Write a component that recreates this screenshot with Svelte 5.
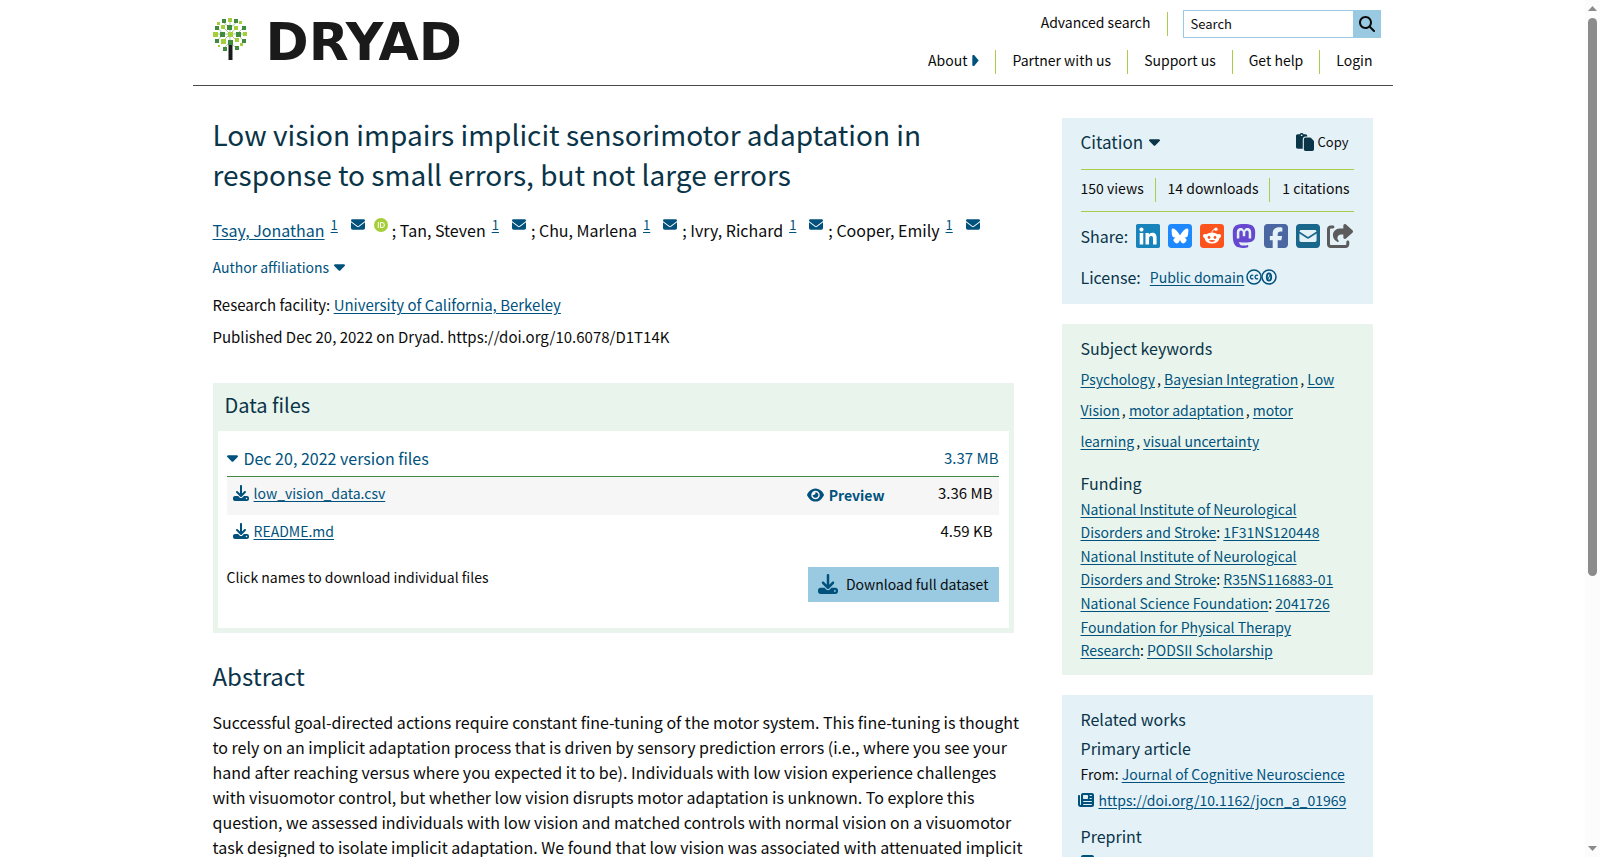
<script lang="ts">
    interface Author {
        name: string;
        orcid?: boolean;
    }

    interface Grant {
        funder: string;
        award: string;
    }

    let query: string = "";

    const navLinks: string[] = ["Partner with us", "Support us", "Get help", "Login"];

    const authors: Author[] = [
        { name: "Tsay, Jonathan", orcid: true },
        { name: "Tan, Steven" },
        { name: "Chu, Marlena" },
        { name: "Ivry, Richard" },
        { name: "Cooper, Emily" },
    ];

    const files = [
        { name: "low_vision_data.csv", size: "3.36 MB", preview: true },
        { name: "README.md", size: "4.59 KB", preview: false },
    ];

    const keywords: string[] = [
        "Psychology",
        "Bayesian Integration",
        "Low Vision",
        "motor adaptation",
        "motor learning",
        "visual uncertainty",
    ];

    const grants: Grant[] = [
        { funder: "National Institute of Neurological Disorders and Stroke", award: "1F31NS120448" },
        { funder: "National Institute of Neurological Disorders and Stroke", award: "R35NS116883-01" },
        { funder: "National Science Foundation", award: "2041726" },
        { funder: "Foundation for Physical Therapy Research", award: "PODSII Scholarship" },
    ];

    // x, y, size, dark?
    const leaves: [number, number, number, boolean][] = [
        [15, 0, 4, false], [9, 1, 4, true], [21, 1, 4, true],
        [4, 4, 3, false], [26, 3, 3, false],
        [2, 8, 4, true], [8, 7, 4, false], [14, 7, 5, true], [21, 8, 4, false], [29, 8, 4, true],
        [0, 14, 5, false], [7, 14, 5, true], [15, 14, 5, false], [23, 14, 5, true], [30, 14, 4, false],
        [2, 21, 4, true], [8, 21, 5, false], [15, 22, 5, true], [22, 20, 4, false], [29, 21, 4, true],
        [5, 27, 2, false], [27, 25, 3, false], [10, 29, 4, true], [22, 28, 4, true],
    ];

    const caret = "M137.4 374.6c12.5 12.5 32.8 12.5 45.3 0l128-128c9.2-9.2 11.9-22.9 6.9-34.9s-16.6-19.8-29.6-19.8L32 192c-12.9 0-24.6 7.8-29.6 19.8s-2.2 25.7 6.9 34.9l128 128z";
    const envelope = "M48 64C21.5 64 0 85.5 0 112c0 15.1 7.1 29.3 19.2 38.4L236.8 313.6c11.4 8.5 27 8.5 38.4 0L492.8 150.4c12.1-9.1 19.2-23.3 19.2-38.4c0-26.5-21.5-48-48-48L48 64zM0 176L0 384c0 35.3 28.7 64 64 64l384 0c35.3 0 64-28.7 64-64l0-208L294.4 339.2c-22.8 17.1-54 17.1-76.8 0L0 176z";
    const download = "M288 32c0-17.7-14.3-32-32-32s-32 14.3-32 32l0 242.7-73.4-73.4c-12.5-12.5-32.8-12.5-45.3 0s-12.5 32.8 0 45.3l128 128c12.5 12.5 32.8 12.5 45.3 0l128-128c12.5-12.5 12.5-32.8 0-45.3s-32.8-12.5-45.3 0L288 274.7 288 32zM64 352c-35.3 0-64 28.7-64 64l0 32c0 35.3 28.7 64 64 64l384 0c35.3 0 64-28.7 64-64l0-32c0-35.3-28.7-64-64-64l-101.5 0-45.3 45.3c-25 25-65.5 25-90.5 0L165.5 352 64 352zm368 56a24 24 0 1 1 0 48 24 24 0 1 1 0-48z";
    const glass = "M416 208c0 45.9-14.9 88.3-40 122.7L502.6 457.4c12.5 12.5 12.5 32.8 0 45.3s-32.8 12.5-45.3 0L330.7 376c-34.4 25.2-76.8 40-122.7 40C93.1 416 0 322.9 0 208S93.1 0 208 0S416 93.1 416 208zM208 352a144 144 0 1 0 0-288 144 144 0 1 0 0 288z";
    const eye = "M288 32c-80.8 0-145.5 36.8-192.6 80.6C48.6 156 17.3 208 2.5 243.7c-3.3 7.9-3.3 16.7 0 24.6C17.3 304 48.6 356 95.4 399.4C142.5 443.2 207.2 480 288 480s145.5-36.8 192.6-80.6c46.8-43.5 78.1-95.4 93-131.1c3.3-7.9 3.3-16.7 0-24.6c-14.9-35.7-46.2-87.7-93-131.1C433.5 68.8 368.8 32 288 32zM144 256a144 144 0 1 1 288 0 144 144 0 1 1 -288 0zm144-64c0 35.3-28.7 64-64 64c-7.1 0-13.9-1.2-20.3-3.3c-5.5-1.8-11.9 1.6-11.7 7.4c.3 6.9 1.3 13.8 3.2 20.7c13.7 51.2 66.4 81.6 117.6 67.9s81.6-66.4 67.9-117.6c-11.1-41.5-47.8-69.4-88.6-71.1c-5.8-.2-9.2 6.1-7.4 11.7c2.1 6.4 3.3 13.2 3.3 20.3z";
    const paste = "M160 0c-23.7 0-44.4 12.9-55.4 32L48 32C21.5 32 0 53.5 0 80L0 400c0 26.5 21.5 48 48 48l144 0 0-272c0-44.2 35.8-80 80-80l48 0 0-16c0-26.5-21.5-48-48-48l-56.6 0C204.4 12.9 183.7 0 160 0zM272 128c-26.5 0-48 21.5-48 48l0 272 0 16c0 26.5 21.5 48 48 48l192 0c26.5 0 48-21.5 48-48l0-220.1c0-12.7-5.1-24.9-14.1-33.9l-67.9-67.9c-9-9-21.2-14.1-33.9-14.1L320 128l-48 0zM160 40a24 24 0 1 1 0 48 24 24 0 1 1 0-48z";
    const linkedin = "M416 32H31.9C14.3 32 0 46.5 0 64.3v383.4C0 465.5 14.3 480 31.9 480H416c17.6 0 32-14.5 32-32.3V64.3c0-17.8-14.4-32.3-32-32.3zM135.4 416H69V202.2h66.5V416zm-33.2-243c-21.3 0-38.5-17.3-38.5-38.5S80.9 96 102.2 96c21.2 0 38.5 17.3 38.5 38.5 0 21.3-17.2 38.5-38.5 38.5zm282.1 243h-66.4V312c0-24.8-.5-56.7-34.5-56.7-34.6 0-39.9 27-39.9 54.9V416h-66.4V202.2h63.7v29.2h.9c8.9-16.8 30.6-34.5 62.9-34.5 67.2 0 79.7 44.3 79.7 101.9V416z";
    const butterfly = "M111.8 62.2C170.2 105.9 233 194.7 256 242.4c23-47.6 85.8-136.4 144.2-180.2c42.1-31.6 110.3-56 110.3 21.8c0 15.5-8.9 130.5-14.1 149.2C478.2 298 412 314.6 353.1 304.5c102.9 17.5 129.1 75.5 72.5 133.5c-107.4 110.2-154.3-27.6-166.3-62.9c-1.7-4.9-2.6-7.8-3.3-7.8s-1.6 3-3.3 7.8c-12 35.3-59 173.1-166.3 62.9c-56.5-58-30.4-116 72.5-133.5C100 314.6 33.8 298 15.7 233.1C10.4 214.4 1.5 99.4 1.5 83.9c0-77.8 68.2-53.4 110.3-21.8z";
    const mastodon = "M433 179.11c0-97.2-63.71-125.7-63.71-125.7-62.52-28.7-228.56-28.4-290.48 0 0 0-63.72 28.5-63.72 125.7 0 115.7-6.6 259.4 105.63 289.1 40.51 10.7 75.32 13 103.33 11.4 50.81-2.8 79.32-18.1 79.32-18.1l-1.7-36.9s-36.31 11.4-77.12 10.1c-40.41-1.4-83-4.4-89.63-54a102.54 102.54 0 0 1-.9-13.9c85.63 20.9 158.65 9.1 178.75 6.7 56.12-6.7 105-41.3 111.23-72.9 9.8-49.8 9-121.5 9-121.5zm-75.12 125.2h-46.63v-114.2c0-49.7-64-51.6-64 6.9v62.5h-46.33V197c0-58.5-64-56.6-64-6.9v114.2H90.19c0-122.1-5.2-147.9 18.41-175 25.9-28.9 79.82-30.8 103.83 6.1l11.6 19.5 11.6-19.5c24.11-37.1 78.12-34.8 103.83-6.1 23.71 27.3 18.4 53 18.4 175z";
    const facebook = "M64 32C28.7 32 0 60.7 0 96V416c0 35.3 28.7 64 64 64h98.2V334.2H109.4V256h52.8V222.3c0-87.1 39.4-127.5 125-127.5c16.2 0 44.2 3.2 55.7 6.4V172c-6-.6-16.5-1-29.6-1c-42 0-58.2 15.9-58.2 57.2V256h83.6l-14.4 78.2H255V480H384c35.3 0 64-28.7 64-64V96c0-35.3-28.7-64-64-64H64z";
    const squareMail = "M64 32C28.7 32 0 60.7 0 96V416c0 35.3 28.7 64 64 64H384c35.3 0 64-28.7 64-64V96c0-35.3-28.7-64-64-64H64zM218 271.7L64.2 172.4C66 156.4 79.5 144 96 144H352c16.5 0 30 12.4 31.8 28.4L230 271.7c-1.8 1.2-3.9 1.8-6 1.8s-4.2-.6-6-1.8zm29.4 26.9L384 210.4V336c0 17.7-14.3 32-32 32H96c-17.7 0-32-14.3-32-32V210.4l136.6 88.2c7 4.5 15.1 6.9 23.4 6.9s16.4-2.4 23.4-6.9z";
    const shareOut = "M352 224l-46.5 0c-45 0-81.5 36.5-81.5 81.5c0 22.3 10.3 34.3 19.2 40.5c6.8 4.7 12.8 12 12.8 20.3c0 9.8-8 17.8-17.8 17.8l-2.5 0c-2.4 0-4.8-.4-7.1-1.4C210.8 374.8 128 333.4 128 240c0-79.5 64.5-144 144-144l80 0 0-61.3C352 15.5 367.5 0 386.7 0c8.6 0 16.8 3.2 23.2 8.9L548.1 133.3c7.6 6.8 11.9 16.5 11.9 26.7s-4.3 19.9-11.9 26.7l-139 125.1c-5.9 5.3-13.5 8.2-21.4 8.2l-3.7 0c-17.7 0-32-14.3-32-32l0-64zM80 96c-8.8 0-16 7.2-16 16l0 320c0 8.8 7.2 16 16 16l320 0c8.8 0 16-7.2 16-16l0-48c0-17.7 14.3-32 32-32s32 14.3 32 32l0 48c0 44.2-35.8 80-80 80L80 512c-44.2 0-80-35.8-80-80L0 112C0 67.8 35.8 32 80 32l48 0c17.7 0 32 14.3 32 32s-14.3 32-32 32L80 96z";
    const newspaper = "M96 96c0-35.3 28.7-64 64-64l288 0c35.3 0 64 28.7 64 64l0 320c0 35.3-28.7 64-64 64L80 480c-44.2 0-80-35.8-80-80L0 128c0-17.7 14.3-32 32-32s32 14.3 32 32l0 272c0 8.8 7.2 16 16 16s16-7.2 16-16L96 96zm64 24l0 80c0 13.3 10.7 24 24 24l112 0c13.3 0 24-10.7 24-24l0-80c0-13.3-10.7-24-24-24L184 96c-13.3 0-24 10.7-24 24zm208-8c0 8.8 7.2 16 16 16l48 0c8.8 0 16-7.2 16-16s-7.2-16-16-16l-48 0c-8.8 0-16 7.2-16 16zm0 96c0 8.8 7.2 16 16 16l48 0c8.8 0 16-7.2 16-16s-7.2-16-16-16l-48 0c-8.8 0-16 7.2-16 16zM160 304c0 8.8 7.2 16 16 16l256 0c8.8 0 16-7.2 16-16s-7.2-16-16-16l-256 0c-8.8 0-16 7.2-16 16zm0 96c0 8.8 7.2 16 16 16l256 0c8.8 0 16-7.2 16-16s-7.2-16-16-16l-256 0c-8.8 0-16 7.2-16 16z";
</script>

<div class="window">
    <div class="scroller">
        <div class="page">
            <header>
                <a href="/" class="logo" aria-label="Dryad home">
                    <svg class="tree" viewBox="0 0 35 42" aria-hidden="true">
                        <path d="M17 3v20M10 4l7 6 7-6M5 10l5 6-5 6M30 10l-6 6 6 6M3 16h28M11 30l6-6 6 6M10 9l7 7 7-7M10 23l7-7 7 7" stroke="#a9cf9f" fill="none" />
                        {#each leaves as [x, y, size, dark]}
                            <rect {x} {y} width={size} height={size} fill={dark ? "#3f8a3f" : "#a5cf3a"} />
                        {/each}
                        <path d="M15.500 27h4v15h-4z" fill="#1a1a1a" />
                    </svg>
                    <span class="wordmark">DRYAD</span>
                </a>
                <div class="header-right">
                    <div class="search-row">
                        <a href="/search">Advanced search</a>
                        <form class="search" on:submit|preventDefault>
                            <input type="text" placeholder="Search" aria-label="Search" bind:value={query} />
                            <button type="submit" aria-label="Search">
                                <svg viewBox="0 0 512 512"><path d={glass} /></svg>
                            </button>
                        </form>
                    </div>
                    <nav>
                        <button class="about">
                            About
                            <svg viewBox="0 0 7 12"><path d="M0 1Q0 0 1 0h1l5 6-5 6H1Q0 12 0 11z" /></svg>
                        </button>
                        {#each navLinks as link}
                            <a href="/">{link}</a>
                        {/each}
                    </nav>
                </div>
            </header>

            <div class="columns">
                <main>
                    <h1>Low vision impairs implicit sensorimotor adaptation in response to small errors, but not large errors</h1>

                    <div class="authors">
                        {#each authors as author, i}
                            <span class="author">
                                {#if i > 0}<span>;&nbsp;</span>{/if}
                                {#if author.orcid}<a href="/">{author.name}</a>{:else}<span>{author.name}</span>{/if}
                                <a class="affil" href="/">1</a>
                                <a class="mail" href="/" aria-label="Email {author.name}">
                                    <svg viewBox="0 64 512 384"><path d={envelope} /></svg>
                                </a>
                                {#if author.orcid}
                                    <a class="orcid" href="/" aria-label="ORCID">
                                        <svg viewBox="0 0 14 14">
                                            <circle cx="7" cy="7" r="7" fill="#a6ce39" />
                                            <path d="M4.3 4v6M6.5 4.5h1.6q2.3 0 2.3 2.5T8.1 9.5H6.5z" stroke="#fff" fill="none" />
                                        </svg>
                                    </a>
                                {/if}
                            </span>
                        {/each}
                    </div>

                    <button class="affiliations">
                        Author affiliations
                        <svg class="caret" viewBox="0 192 320 192"><path d={caret} /></svg>
                    </button>
                    <p class="meta">Research facility: <a href="/">University of California, Berkeley</a></p>
                    <p class="meta">Published Dec 20, 2022 on Dryad. https://doi.org/10.6078/D1T14K</p>

                    <section class="data-files">
                        <h2>Data files</h2>
                        <div class="files-box">
                            <button class="version">
                                <svg class="caret" viewBox="0 192 320 192"><path d={caret} /></svg>
                                <span class="version-name">Dec 20, 2022 version files</span>
                                <span class="total">3.37 MB</span>
                            </button>
                            <ul class="files">
                                {#each files as file}
                                    <li>
                                        <a href="/" class="file">
                                            <svg viewBox="0 0 512 512"><path d={download} /></svg><span>{file.name}</span>
                                        </a>
                                        {#if file.preview}
                                            <button class="preview">
                                                <svg viewBox="0 32 576 448"><path d={eye} /></svg>Preview
                                            </button>
                                        {/if}
                                        <span class="size">{file.size}</span>
                                    </li>
                                {/each}
                            </ul>
                            <div class="download-row">
                                <span>Click names to download individual files</span>
                                <button class="download">
                                    <svg viewBox="0 0 512 512"><path d={download} /></svg>Download full dataset
                                </button>
                            </div>
                        </div>
                    </section>

                    <h2 class="abstract-title">Abstract</h2>
                    <p class="abstract">
                        Successful goal-directed actions require constant fine-tuning of the motor system. This fine-tuning is thought
                        to rely on an implicit adaptation process that is driven by sensory prediction errors (i.e., where you see your
                        hand after reaching versus where you expected it to be). Individuals with low vision experience challenges
                        with visuomotor control, but whether low vision disrupts motor adaptation is unknown. To explore this
                        question, we assessed individuals with low vision and matched controls with normal vision on a visuomotor
                        task designed to isolate implicit adaptation. We found that low vision was associated with attenuated implicit
                    </p>
                </main>

                <aside>
                    <section class="panel blue">
                        <div class="cite-row">
                            <button class="cite">
                                Citation
                                <svg class="caret" viewBox="0 192 320 192"><path d={caret} /></svg>
                            </button>
                            <button class="copy">
                                <svg viewBox="0 0 512 512"><path d={paste} /></svg>Copy
                            </button>
                        </div>
                        <div class="stats">
                            <span>150 views</span>
                            <span>14 downloads</span>
                            <span>1 citations</span>
                        </div>
                        <div class="share">
                            <span>Share:</span>
                            <a href="/" aria-label="LinkedIn"><svg viewBox="0 32 448 448" fill="#1783bb"><path fill="#fff" d="M40 70h370v370H40z" /><path d={linkedin} /></svg></a>
                            <a href="/" aria-label="Bluesky">
                                <svg viewBox="0 0 448 448">
                                    <rect width="448" height="448" rx="64" fill="#1e88fe" />
                                    <g transform="translate(66 66) scale(.617)"><path d={butterfly} fill="#fff" /></g>
                                </svg>
                            </a>
                            <a href="/" aria-label="Reddit">
                                <svg viewBox="0 0 448 448">
                                    <rect width="448" height="448" rx="64" fill="#fc541c" />
                                    <g fill="#fff">
                                        <ellipse cx="224" cy="262" rx="138" ry="104" />
                                        <circle cx="92" cy="224" r="38" />
                                        <circle cx="356" cy="224" r="38" />
                                        <circle cx="298" cy="97" r="31" />
                                    </g>
                                    <path d="M224 165c0-38 20-64 62-68" stroke="#fff" stroke-width="18" fill="none" />
                                    <ellipse cx="168" cy="249" rx="25" ry="29" fill="#fc541c" />
                                    <ellipse cx="280" cy="249" rx="25" ry="29" fill="#fc541c" />
                                    <path d="M164 304q60-14 120 0q-14 32-60 32t-60-32z" fill="#fc541c" />
                                </svg>
                            </a>
                            <a href="/" aria-label="Mastodon"><svg viewBox="0 32 448 448" fill="#6648d0"><path d={mastodon} /></svg></a>
                            <a href="/" aria-label="Facebook"><svg viewBox="0 32 448 448" fill="#4b67a1"><path d={facebook} /></svg></a>
                            <a href="/" aria-label="Email"><svg viewBox="0 32 448 448" fill="#1a678c"><path d={squareMail} /></svg></a>
                            <a href="/" aria-label="More ways to share"><svg class="wide" viewBox="0 0 560 512" fill="#5b5b5b"><path d={shareOut} /></svg></a>
                        </div>
                        <div class="license">
                            <span>License:</span>
                            <a href="/">Public domain</a>
                            <svg viewBox="0 0 31 16" fill="none" stroke="#00527d" aria-hidden="true">
                                <circle cx="8" cy="8" r="7" stroke-width="1.5" />
                                <path d="M7.3 6.6a1.8 1.8 0 1 0 0 2.8M12 6.6a1.8 1.8 0 1 0 0 2.8" stroke-width="1.3" />
                                <circle cx="23" cy="8" r="7" stroke-width="1.5" />
                                <ellipse cx="23" cy="8" rx="2.2" ry="3.6" stroke-width="1.8" />
                                <path d="M22 10l2-4" />
                            </svg>
                        </div>
                    </section>

                    <section class="panel green">
                        <h3>Subject keywords</h3>
                        <p class="keywords">
                            {#each keywords as keyword, i}<a href="/">{keyword}</a>{#if i < keywords.length - 1}<span class="comma">,</span>{" "}{/if}{/each}
                        </p>
                        <h3>Funding</h3>
                        <ul class="grants">
                            {#each grants as grant}
                                <li><a href="/">{grant.funder}</a>: <a href="/">{grant.award}</a></li>
                            {/each}
                        </ul>
                    </section>

                    <section class="panel blue related">
                        <h3>Related works</h3>
                        <h4>Primary article</h4>
                        <p class="journal">From: <a href="/">Journal of Cognitive Neuroscience</a></p>
                        <p class="doi">
                            <svg viewBox="0 32 512 448"><path d={newspaper} /></svg>
                            <a href="/">https://doi.org/10.1162/jocn_a_01969</a>
                        </p>
                        <h4>Preprint</h4>
                        <p class="doi">
                            <svg viewBox="0 32 512 448"><path d={newspaper} /></svg>
                        </p>
                    </section>
                </aside>
            </div>
        </div>
    </div>
    <div class="scrollbar" aria-hidden="true">
        <svg viewBox="0 0 9 5"><path d="M0 5l4.500-5 4.500 5z" /></svg>
        <div class="track"><div class="thumb"></div></div>
        <svg viewBox="0 0 9 5"><path d="M0 0l4.500 5 4.500-5z" /></svg>
    </div>
</div>

<style>
    :global(body) {
        background-color: #fff;
        color: #0b0b0b;
        font-family: "Noto Sans CJK SC", "Noto Sans", sans-serif;
        font-size: 14px;
        line-height: 24px;
    }

    h1, h2, h3, h4, p, ul {
        margin: 0;
        padding: 0;
        font-weight: 400;
    }

    h1, h2, h3, h4 {
        color: #0a3448;
    }

    ul {
        list-style: none;
    }

    a {
        color: #00527d;
        text-underline-offset: 2px;
    }

    button {
        display: flex;
        align-items: center;
        padding: 0;
        border: 0;
        background: none;
        color: inherit;
        font: inherit;
        cursor: pointer;
    }

    svg {
        flex: none;
    }

    svg:not([fill]) {
        fill: currentColor;
    }

    .window {
        display: flex;
        height: 100vh;
    }

    .scroller {
        flex: 1;
        overflow-y: auto;
        scrollbar-width: none;
    }

    .page {
        max-width: 1200px;
        margin: 0 auto;
    }

    header {
        display: flex;
        justify-content: space-between;
        align-items: flex-start;
        padding: 10px 12px 11px 20px;
        border-bottom: 1px solid #4a4a4a;
    }

    .logo {
        display: flex;
        align-items: flex-start;
        gap: 18px;
        padding-top: 8px;
        text-decoration: none;
    }

    .tree {
        width: 35px;
        height: 42px;
    }

    .wordmark {
        color: #1a1a1a;
        font-family: "DejaVu Sans", sans-serif;
        font-size: 52px;
        font-weight: 700;
        line-height: 48px;
    }

    .header-right {
        display: flex;
        flex-direction: column;
        align-items: flex-end;
        gap: 12px;
    }

    .search-row {
        display: flex;
        align-items: center;
    }

    .search-row > a,
    nav a,
    .about {
        padding: 0 16px 4px;
        border-right: 1px solid #a9cc4b;
        color: #0b0b0b;
        line-height: 20px;
        text-decoration: none;
    }

    .search {
        display: flex;
        margin-left: 15px;
    }

    .search input {
        box-sizing: border-box;
        width: 170px;
        height: 28px;
        padding: 0 7px 2px;
        border: 1px solid #99cae1;
        border-right: 0;
        font-family: inherit;
        font-size: 13px;
    }

    .search input::placeholder {
        color: #0b0b0b;
    }

    .search button {
        justify-content: center;
        width: 28px;
        height: 28px;
        background-color: #99cae1;
    }

    .search svg {
        width: 16px;
        height: 16px;
    }

    nav {
        display: flex;
        margin-right: 8px;
    }

    nav a:last-child {
        padding-right: 0;
        border-right: 0;
    }

    .about {
        gap: 5px;
    }

    .about svg {
        width: 7px;
        height: 11px;
        color: #00527d;
    }

    .columns {
        display: flex;
        align-items: flex-start;
        gap: 48px;
        padding: 28px 20px;
    }

    main {
        flex: 1;
        min-width: 0;
    }

    h1 {
        font-size: 28px;
        line-height: 40px;
    }

    .authors {
        display: flex;
        flex-wrap: wrap;
        margin-top: 24px;
        font-size: 16px;
    }

    .author {
        display: flex;
        align-items: center;
        white-space: nowrap;
    }

    .affil {
        align-self: flex-start;
        margin-left: 6px;
        font-size: 13px;
        line-height: 14px;
    }

    .mail {
        align-self: flex-start;
        display: flex;
        margin: 1px 5px 0 13px;
    }

    .mail svg {
        width: 14px;
        height: 11px;
    }

    .orcid {
        display: flex;
        align-self: flex-start;
        margin: 0 4px;
    }

    .orcid svg {
        width: 14px;
        height: 14px;
    }

    .affiliations {
        gap: 5px;
        margin: 13px 0 14px;
        color: #00527d;
    }

    .caret {
        width: 11px;
        height: 7px;
    }

    .meta {
        margin-bottom: 8px;
        font-size: 15px;
    }

    .data-files {
        margin-top: 34px;
        padding: 5px;
        background-color: #e9f5ec;
    }

    .data-files h2 {
        padding: 2px 7px 11px;
        font-size: 20px;
        line-height: 30px;
    }

    .files-box {
        padding: 12px 10px 26px 9px;
        background-color: #fff;
    }

    .version {
        gap: 6px;
        width: 100%;
        padding: 3px 0 6px;
        border-bottom: 1px solid #3f8a3f;
        color: #00527d;
        text-align: left;
    }

    .version-name {
        flex: 1;
        font-size: 16px;
    }

    .files li {
        display: flex;
        align-items: flex-start;
        height: 30px;
        padding: 4px 6px;
    }

    .files li:nth-child(odd) {
        background-color: #f6f6f6;
    }

    .file {
        display: flex;
        flex: 1;
        align-items: center;
        gap: 5px;
        text-decoration: none;
    }

    .file span {
        text-decoration: underline;
    }

    .file svg {
        width: 16px;
        height: 16px;
    }

    .preview {
        gap: 5px;
        padding-top: 2px;
        color: #00527d;
        font-weight: 700;
    }

    .preview svg {
        width: 17px;
        height: 14px;
    }

    .size,
    .total {
        font-size: 15px;
    }

    .size {
        width: 108px;
        text-align: right;
    }

    .download-row {
        display: flex;
        justify-content: space-between;
        align-items: flex-start;
        margin-top: 14px;
        line-height: 20px;
    }

    .download {
        gap: 8px;
        padding: 7px 10px 8px;
        background-color: #99cae1;
        line-height: 20px;
    }

    .download svg {
        width: 20px;
        height: 20px;
        color: #00527d;
    }

    .abstract-title {
        margin: 25px 0 16px;
        font-size: 24px;
        line-height: 36px;
    }

    .abstract {
        margin-right: -10px;
        font-size: 16px;
        line-height: 25px;
    }

    aside {
        flex: none;
        width: 311px;
        margin-top: 4px;
    }

    .panel {
        margin-bottom: 20px;
        padding: 12px 19px;
    }

    .blue {
        background-color: #e4f1f7;
    }

    .green {
        background-color: #e9f5ec;
    }

    h3, h4 {
        font-size: 16px;
        line-height: 24px;
    }

    .cite-row {
        display: flex;
        justify-content: space-between;
        padding-bottom: 15px;
        border-bottom: 1px solid #a9cc4b;
    }

    .cite {
        gap: 6px;
        color: #0a3448;
        font-size: 17px;
    }

    .copy {
        gap: 4px;
        padding-right: 5px;
        font-size: 13px;
    }

    .copy svg {
        width: 18px;
        height: 18px;
        color: #0a3448;
    }

    .stats {
        display: flex;
        justify-content: space-between;
        padding: 8px 4px 9px 0;
        border-bottom: 1px solid #a9cc4b;
        line-height: 20px;
    }

    .stats span {
        padding-bottom: 4px;
    }

    .stats span:not(:last-child) {
        padding-right: 11px;
        border-right: 1px solid #a9cc4b;
    }

    .share {
        display: flex;
        justify-content: space-between;
        align-items: center;
        margin-top: 12px;
        color: #0a3448;
        font-size: 16px;
    }

    .share a {
        display: flex;
    }

    .share svg {
        width: 24px;
        height: 24px;
    }

    .share .wide {
        width: 26px;
    }

    .license {
        display: flex;
        align-items: center;
        margin: 17px 0 3px;
        color: #0a3448;
        font-size: 16px;
    }

    .license a {
        margin: 0 2px 0 9px;
        font-size: 14px;
    }

    .license svg {
        width: 31px;
        height: 16px;
    }

    .keywords {
        margin: 4px 0 14px;
        line-height: 31px;
    }

    .comma {
        margin-left: 2px;
    }

    .grants {
        margin-top: 3px;
        line-height: 23px;
    }

    .grants li {
        margin-bottom: 1px;
    }

    .related h4 {
        margin-top: 5px;
    }

    .journal {
        margin-top: 2px;
    }

    .doi {
        display: flex;
        align-items: center;
        gap: 5px;
        min-height: 24px;
        margin: 2px 0 12px -3px;
    }

    .doi svg {
        width: 16px;
        height: 14px;
        color: #00527d;
    }

    .scrollbar {
        display: flex;
        flex-direction: column;
        align-items: center;
        justify-content: space-between;
        box-sizing: border-box;
        width: 15px;
        padding: 6px 0;
        background-color: #fcfcfc;
        color: #8b8b8b;
    }

    .scrollbar svg {
        width: 9px;
        height: 5px;
    }

    .track {
        flex: 1;
        margin: 7px 0;
    }

    .thumb {
        width: 9px;
        height: 68%;
        border-radius: 5px;
        background-color: #8b8b8b;
    }
</style>
